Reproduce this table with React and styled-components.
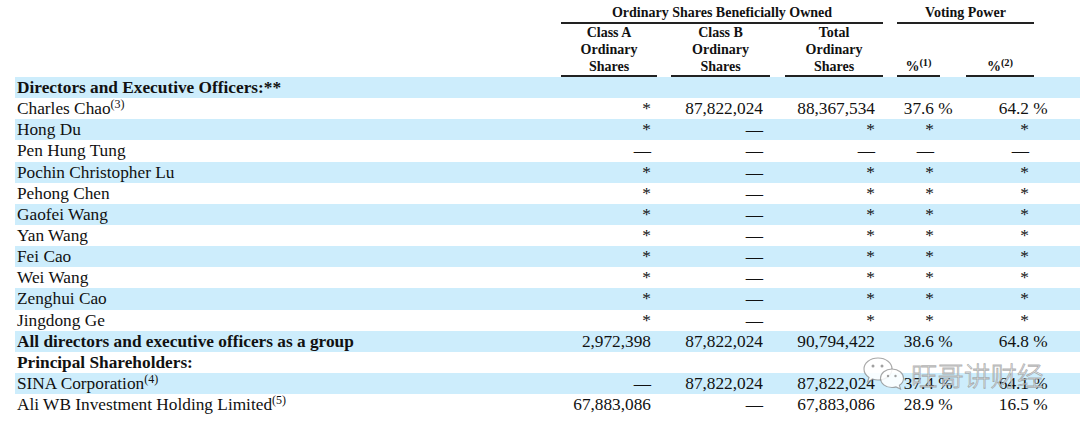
import React from "react";
import styled, { createGlobalStyle } from "styled-components";

const GlobalStyle = createGlobalStyle`
  html, body {
    margin: 0;
    padding: 0;
    background: #fff;
  }
  body {
    font-family: "Liberation Serif", "Times New Roman", serif;
    color: #111;
  }
`;

const Page = styled.div`
  position: relative;
  width: 1080px;
  height: 423px;
  overflow: hidden;
  padding-left: 15px;
  box-sizing: border-box;
`;

const Head = styled.div`
  display: grid;
  grid-template-columns: 546px 96px 14px 99px 15px 98px 14px 43px 26px 68px 26px;
  grid-template-rows: 24px 53px;
  font-size: 14px;
  font-weight: bold;
  line-height: 17px;
`;

const SpanHead = styled.div`
  grid-row: 1;
  grid-column: ${(p) => p.$cols};
  border-bottom: 2px solid #222;
  text-align: center;
  padding-top: 4px;
  box-sizing: border-box;
`;

const ColHead = styled.div`
  grid-row: 2;
  grid-column: ${(p) => p.$col};
  border-bottom: 2px solid #222;
  text-align: center;
  display: flex;
  flex-direction: column;
  justify-content: flex-end;
`;

const Sup = styled.sup`
  font-size: ${(p) => p.$size || "12px"};
  vertical-align: ${(p) => p.$lift || "0.5em"};
  line-height: 0;
  font-weight: inherit;
`;

const Body = styled.div`
  display: flex;
  flex-direction: column;
`;

const Row = styled.div`
  display: grid;
  grid-template-columns: 540px 96px 112px 112px 59px 32px 63px 31px;
  height: 21.15px;
  align-items: center;
  font-size: 17.3px;
  line-height: 21px;
  background: ${(p) => (p.$shaded ? "#cdedfc" : "transparent")};
  white-space: nowrap;
`;

const Label = styled.div`
  padding-left: 2px;
  font-weight: ${(p) => (p.$bold ? "bold" : "normal")};
`;

const Num = styled.div`
  text-align: right;
`;

const Pct = styled.div`
  text-align: left;
`;

const Watermark = styled.div`
  position: absolute;
  left: 862px;
  top: 356px;
  display: flex;
  align-items: center;
  gap: 5px;
  pointer-events: none;
`;

const MarkText = styled.span`
  font-family: "Noto Sans CJK SC", sans-serif;
  font-size: 26.5px;
  font-weight: 300;
  line-height: 30px;
  color: rgba(255, 255, 255, 0.85);
  -webkit-text-stroke: 0.8px rgba(120, 120, 120, 0.6);
  margin-top: 4px;
`;

const rows = [
  { label: "Directors and Executive Officers:**", bold: true },
  { label: "Charles Chao", sup: "3", v: ["*", "87,822,024", "88,367,534", "37.6", "64.2"] },
  { label: "Hong Du", v: ["*", "—", "*", "*", "*"] },
  { label: "Pen Hung Tung", v: ["—", "—", "—", "—", "—"] },
  { label: "Pochin Christopher Lu", v: ["*", "—", "*", "*", "*"] },
  { label: "Pehong Chen", v: ["*", "—", "*", "*", "*"] },
  { label: "Gaofei Wang", v: ["*", "—", "*", "*", "*"] },
  { label: "Yan Wang", v: ["*", "—", "*", "*", "*"] },
  { label: "Fei Cao", v: ["*", "—", "*", "*", "*"] },
  { label: "Wei Wang", v: ["*", "—", "*", "*", "*"] },
  { label: "Zenghui Cao", v: ["*", "—", "*", "*", "*"] },
  { label: "Jingdong Ge", v: ["*", "—", "*", "*", "*"] },
  {
    label: "All directors and executive officers as a group",
    bold: true,
    v: ["2,972,398", "87,822,024", "90,794,422", "38.6", "64.8"],
  },
  { label: "Principal Shareholders:", bold: true },
  { label: "SINA Corporation", sup: "4", v: ["—", "87,822,024", "87,822,024", "37.4", "64.1"] },
  {
    label: "Ali WB Investment Holding Limited",
    sup: "5",
    v: ["67,883,086", "—", "67,883,086", "28.9", "16.5"],
  },
];

const isNumber = (s) => /\d/.test(s);

const WeChatLogo = () => (
  <svg width="44" height="34" viewBox="0 0 44 34">
    <g stroke="rgba(120,120,120,0.65)" strokeWidth="1.1" fill="rgba(255,255,255,0.85)">
      <path d="M16 2 C8 2 2 7 2 13 C2 16.5 4 19.5 7 21.5 L5.5 26 L11 23.2 C12.6 23.7 14.3 24 16 24 C24 24 30 19 30 13 C30 7 24 2 16 2 Z" />
      <path d="M30 13 C23.5 13 18.5 17.2 18.5 22.3 C18.5 27.4 23.5 31.5 30 31.5 C31.4 31.5 32.7 31.3 34 30.9 L38.5 33 L37.4 29.3 C40 27.6 41.5 25.1 41.5 22.3 C41.5 17.2 36.5 13 30 13 Z" />
    </g>
    <g fill="rgba(120,120,120,0.7)">
      <circle cx="11" cy="10" r="1.5" />
      <circle cx="20" cy="10" r="1.5" />
      <circle cx="26" cy="20" r="1.2" />
      <circle cx="33.5" cy="20" r="1.2" />
    </g>
  </svg>
);

const App = () => {
  return (
    <>
      <GlobalStyle />
      <Page>
        <Head>
          <SpanHead $cols="2 / 7">Ordinary Shares Beneficially Owned</SpanHead>
          <SpanHead $cols="8 / 11">Voting Power</SpanHead>
          <ColHead $col="2">
            <div>Class A</div>
            <div>Ordinary</div>
            <div>Shares</div>
          </ColHead>
          <ColHead $col="4">
            <div>Class B</div>
            <div>Ordinary</div>
            <div>Shares</div>
          </ColHead>
          <ColHead $col="6">
            <div>Total</div>
            <div>Ordinary</div>
            <div>Shares</div>
          </ColHead>
          <ColHead $col="8">
            <div>
              %<Sup $size="10.5px" $lift="0.45em">(1)</Sup>
            </div>
          </ColHead>
          <ColHead $col="10">
            <div>
              %<Sup $size="10.5px" $lift="0.45em">(2)</Sup>
            </div>
          </ColHead>
        </Head>
        <Body>
          {rows.map((r, i) => (
            <Row key={r.label} $shaded={i % 2 === 0}>
              <Label $bold={r.bold}>
                {r.label}
                {r.sup && <Sup>({r.sup})</Sup>}
              </Label>
              {r.v && (
                <>
                  <Num>{r.v[0]}</Num>
                  <Num>{r.v[1]}</Num>
                  <Num>{r.v[2]}</Num>
                  <Num>{r.v[3]}</Num>
                  <Pct>{isNumber(r.v[3]) ? "\u00a0%" : ""}</Pct>
                  <Num>{r.v[4]}</Num>
                  <Pct>{isNumber(r.v[4]) ? "\u00a0%" : ""}</Pct>
                </>
              )}
            </Row>
          ))}
        </Body>
        <Watermark>
          <WeChatLogo />
          <MarkText>旺哥讲财经</MarkText>
        </Watermark>
      </Page>
    </>
  );
};

export default App;
